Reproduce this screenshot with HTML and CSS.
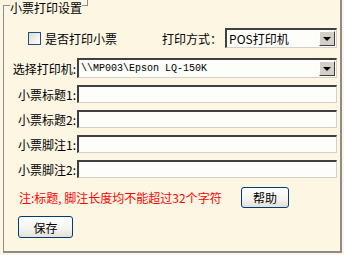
FILE: index.html
```html
<!DOCTYPE html>
<html lang="zh-CN">
<head>
  <meta charset="UTF-8" />
  <meta name="viewport" content="width=device-width, initial-scale=1.0" />
  <title>小票打印设置</title>
  <link rel="stylesheet" href="styles.css">
</head>
<body>
  <div class="frame">
    <div class="group">
      <div class="group-head">
        <span class="head-line head-line-left"></span>
        <span class="group-title">小票打印设置</span>
        <span class="head-line head-line-right"></span>
      </div>

      <div class="top-row">
        <label class="check">
          <span class="checkbox"></span>
          是否打印小票
        </label>
        <span class="mode-label">打印方式：</span>
        <div class="select select-mode">
          <span class="select-text">POS打印机</span>
          <span class="drop"></span>
        </div>
      </div>

      <div class="form">
        <span class="label">选择打印机:</span>
        <div class="select">
          <span class="select-text mono">\\MP003\Epson LQ-150K</span>
          <span class="drop"></span>
        </div>

        <span class="label">小票标题1:</span>
        <div class="input"></div>

        <span class="label">小票标题2:</span>
        <div class="input"></div>

        <span class="label">小票脚注1:</span>
        <div class="input"></div>

        <span class="label">小票脚注2:</span>
        <div class="input"></div>
      </div>

      <div class="note-row">
        <span class="note">注:标题, 脚注长度均不能超过32个字符</span>
        <button class="btn btn-help">帮助</button>
      </div>

      <button class="btn btn-save">保存</button>
    </div>
  </div>
</body>
</html>
```

FILE: styles.css
```css
body {
  margin: 0;
  padding: 0;
  width: 344px;
  height: 255px;
  overflow: hidden;
  background-color: #fdf6e3;
  font-family: "Noto Sans CJK SC", "Liberation Sans", sans-serif;
  font-size: 12px;
  color: #000;
}
.frame {
  width: 342px;
  height: 253px;
  padding-top: 5px;
  box-sizing: border-box;
  border-right: 2px solid #8c8c8c;
}
.group {
  margin-left: 3px;
  height: 248px;
  box-sizing: border-box;
  border-left: 1px solid #8c8c8c;
  border-bottom: 2px solid #8c8c8c;
}
.group-head {
  display: flex;
  align-items: flex-start;
  height: 0;
}
.head-line {
  border-top: 1px solid #8c8c8c;
}
.head-line-left {
  width: 6px;
}
.head-line-right {
  width: 6px;
  height: 6px;
  margin-top: -5px;
  box-sizing: border-box;
  border-top: none;
  border-bottom: 1px solid #8c8c8c;
  border-right: 1px solid #8c8c8c;
}
.group-title {
  margin-top: -4px;
  line-height: 13px;
}
.top-row {
  display: flex;
  align-items: center;
  height: 20px;
  margin-top: 23px;
  padding-left: 24px;
}
.check {
  display: flex;
  align-items: center;
  gap: 4px;
}
.checkbox {
  width: 11px;
  height: 11px;
  border: 1px solid #1c5180;
  background: linear-gradient(135deg, #dcdcd5 0%, #f2f2ee 60%, #ffffff 100%);
}
.mode-label {
  margin-left: 45px;
  margin-right: 3px;
}
.select {
  display: flex;
  align-items: center;
  height: 20px;
  box-sizing: border-box;
  border-top: 2px solid #404040;
  border-left: 2px solid #404040;
  border-right: 1px solid #d4d0c8;
  border-bottom: 1px solid #d4d0c8;
  background-color: #fdfdfa;
}
.select-mode {
  width: 112px;
}
.select-text {
  flex: 1;
  padding-left: 2px;
  line-height: 16px;
  white-space: nowrap;
}
.mono {
  font-family: "Liberation Mono", monospace;
  font-size: 10px;
}
.drop {
  position: relative;
  width: 16px;
  height: 15px;
  margin-right: 1px;
  box-sizing: border-box;
  background-color: #d4d0c8;
  border-top: 1px solid #ffffff;
  border-left: 1px solid #ffffff;
  border-right: 1px solid #404040;
  border-bottom: 1px solid #404040;
}
.drop::after {
  content: "";
  position: absolute;
  left: 3px;
  top: 5px;
  border-left: 4px solid transparent;
  border-right: 4px solid transparent;
  border-top: 4px solid #000;
}
.form {
  display: grid;
  grid-template-columns: 72px 260px;
  grid-template-rows: 20px 18px 18px 18px 18px;
  column-gap: 1px;
  row-gap: 7px;
  margin-top: 10px;
  align-items: center;
}
.label {
  text-align: right;
  white-space: nowrap;
}
.input {
  height: 18px;
  box-sizing: border-box;
  border-top: 2px solid #404040;
  border-left: 2px solid #404040;
  border-right: 1px solid #d4d0c8;
  border-bottom: 1px solid #d4d0c8;
  background-color: #fdfdfa;
}
.note-row {
  display: flex;
  align-items: center;
  margin-top: 9px;
  padding-left: 15px;
}
.note {
  color: #ff0000;
  width: 222px;
  white-space: nowrap;
}
.btn {
  font-family: "Noto Sans CJK SC", "Liberation Sans", sans-serif;
  font-size: 12px;
  color: #000;
  padding: 0;
  border: 1px solid #003c74;
  border-radius: 3px;
  background: linear-gradient(#ffffff 0%, #f4f3ee 60%, #e3e1d8 100%);
}
.btn-help {
  width: 48px;
  height: 21px;
}
.btn-save {
  display: block;
  width: 55px;
  height: 22px;
  margin: 8px 0 0 14px;
}
```
